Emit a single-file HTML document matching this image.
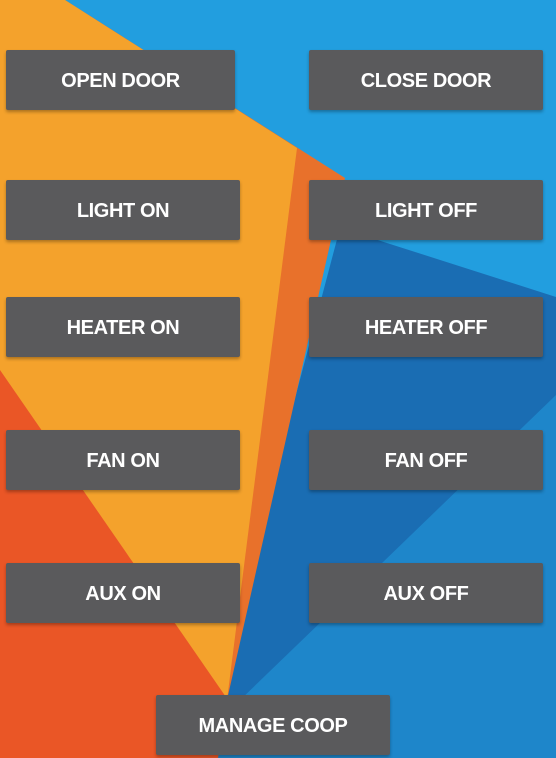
<!DOCTYPE html>
<html><head><meta charset="utf-8"><style>
html,body{margin:0;padding:0;width:556px;height:758px;overflow:hidden;}
body{position:relative;font-family:"Liberation Sans",sans-serif;}
svg.bg{position:absolute;left:0;top:0;}
.b{position:absolute;background:#5a5a5c;color:#fff;font-weight:bold;font-size:20px;letter-spacing:-0.4px;
display:flex;align-items:center;justify-content:center;height:57px;padding-top:3px;border-radius:2px;
box-shadow:0 2px 3px rgba(0,0,0,0.3);}
</style></head><body>
<svg class="bg" width="556" height="758" viewBox="0 0 556 758">
<rect width="556" height="758" fill="#229EDF"/>
<polygon points="340,228 556,297 556,758 200,758" fill="#1A6DB3"/>
<polygon points="556,395 556,758 180,758" fill="#1E86CA"/>
<polygon points="0,0 65,0 345,178 227,700 215,758 0,758" fill="#E8712B"/>
<polygon points="0,0 65,0 297,148 227,700 215,758 0,758" fill="#F4A22C"/>
<polygon points="0,370 228,700 218,758 0,758" fill="#EA5626"/>
</svg>
<div class="b" style="left:6px;top:50px;width:229px;">OPEN DOOR</div>
<div class="b" style="left:309px;top:50px;width:234px;">CLOSE DOOR</div>
<div class="b" style="left:6px;top:180px;width:234px;">LIGHT ON</div>
<div class="b" style="left:309px;top:180px;width:234px;">LIGHT OFF</div>
<div class="b" style="left:6px;top:297px;width:234px;">HEATER ON</div>
<div class="b" style="left:309px;top:297px;width:234px;">HEATER OFF</div>
<div class="b" style="left:6px;top:430px;width:234px;">FAN ON</div>
<div class="b" style="left:309px;top:430px;width:234px;">FAN OFF</div>
<div class="b" style="left:6px;top:563px;width:234px;">AUX ON</div>
<div class="b" style="left:309px;top:563px;width:234px;">AUX OFF</div>
<div class="b" style="left:156px;top:695px;width:234px;">MANAGE COOP</div>
</body></html>
